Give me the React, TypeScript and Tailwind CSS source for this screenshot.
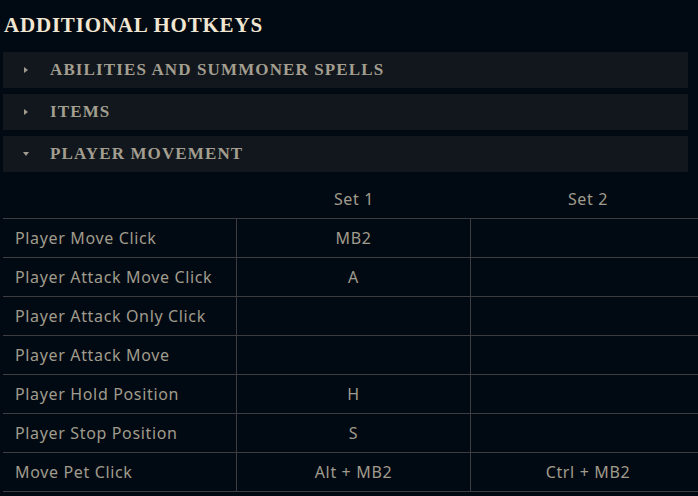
import React from "react";

const sections = [
  { label: "ABILITIES AND SUMMONER SPELLS", open: false },
  { label: "ITEMS", open: false },
  { label: "PLAYER MOVEMENT", open: true },
];

const rows: [string, string, string][] = [
  ["Player Move Click", "MB2", ""],
  ["Player Attack Move Click", "A", ""],
  ["Player Attack Only Click", "", ""],
  ["Player Attack Move", "", ""],
  ["Player Hold Position", "H", ""],
  ["Player Stop Position", "S", ""],
  ["Move Pet Click", "Alt + MB2", "Ctrl + MB2"],
];

function Tri({ open }: { open: boolean }) {
  return (
    <svg width="8" height="8" viewBox="0 0 8 8" className="shrink-0">
      {open ? (
        <polygon points="1,2 7,2 4,6" fill="#a09b8c" />
      ) : (
        <polygon points="2,1 6,4 2,7" fill="#a09b8c" />
      )}
    </svg>
  );
}

export default function App() {
  return (
    <div className="w-[698px] h-[496px] overflow-hidden bg-[#010a13] relative">
      <div className="pt-[12px] pl-[4px] h-[52px]">
        <h1
          className="text-[21px] leading-[26px] font-bold tracking-[0.8px] text-[#f0e6d2]"
          style={{ fontFamily: '"Liberation Serif", "DejaVu Serif", serif' }}
        >
          ADDITIONAL HOTKEYS
        </h1>
      </div>
      <div className="flex flex-col gap-[6px] pl-[3px] w-[688px]">
        {sections.map((s) => (
          <div
            key={s.label}
            className="h-[36px] bg-[#11171d] flex items-center pl-[19px]"
          >
            <Tri open={s.open} />
            <span
              className="ml-[20px] text-[17px] font-bold tracking-[1.12px] text-[#a39e8f]"
              style={{ fontFamily: '"Liberation Serif", "DejaVu Serif", serif' }}
            >
              {s.label}
            </span>
          </div>
        ))}
      </div>
      <div
        className="ml-[3px] w-[702px] text-[16px] tracking-[0.65px] text-[#a09b8c]"
        style={{ fontFamily: '"Noto Sans", "Open Sans", sans-serif' }}
      >
        <div className="h-[47px] grid grid-cols-[234px_234px_234px] border-b border-[#3c3c41]">
          <div />
          <div className="flex items-center justify-center pt-[8px]">Set 1</div>
          <div className="flex items-center justify-center pt-[8px]">Set 2</div>
        </div>
        {rows.map((r) => (
          <div
            key={r[0]}
            className="h-[39px] grid grid-cols-[234px_234px_234px] border-b border-[#3c3c41]"
          >
            <div className="flex items-center pl-[12px] border-r border-[#3c3c41]">
              {r[0]}
            </div>
            <div className="flex items-center justify-center border-r border-[#3c3c41]">
              {r[1]}
            </div>
            <div className="flex items-center justify-center">{r[2]}</div>
          </div>
        ))}
      </div>
    </div>
  );
}
